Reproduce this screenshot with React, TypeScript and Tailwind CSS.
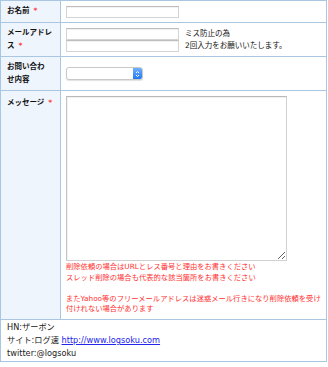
import React from 'react'

const font = { fontFamily: '"DejaVu Sans", "Noto Sans CJK JP", sans-serif' }

function Star() {
  return <span className="text-[#ff3b3b] ml-[4px]">*</span>
}

function TextInput({ w = 'w-[113px]' }: { w?: string }) {
  return (
    <div className={`${w} h-[12px] bg-white border border-[#d4d4d4] border-t-[#bdbdbd] shadow-[inset_0_1px_1px_rgba(0,0,0,0.06)]`} />
  )
}

function FakeSelect() {
  return (
    <div className="flex w-[77px] h-[13px] rounded-[3px] border border-[#c8c8c8] bg-white shadow-[0_1px_1px_rgba(0,0,0,0.12)] overflow-hidden">
      <div className="flex-1" />
      <div className="w-[9px] h-full bg-gradient-to-b from-[#6fb0ff] to-[#1c78f0] flex items-center justify-center">
        <svg width="5" height="8" viewBox="0 0 5 8" fill="none" stroke="white" strokeWidth="1">
          <path d="M1 3 L2.5 1.5 L4 3" />
          <path d="M1 5 L2.5 6.5 L4 5" />
        </svg>
      </div>
    </div>
  )
}

export default function App() {
  return (
    <div className="w-[328px] h-[367px] bg-white text-[#111]" style={font}>
      <div className="w-[327px] border border-[#a9c6e3]">
        {/* お名前 */}
        <div className="flex h-[22px] border-b border-[#a9c6e3]">
          <div className="w-[60px] shrink-0 bg-[#eef5fd] border-r border-[#a9c6e3] pl-[6px] pt-[3px] text-[7.5px] leading-[13px] font-bold">
            お名前<Star />
          </div>
          <div className="flex-1 flex items-center pl-[5px]">
            <TextInput />
          </div>
        </div>

        {/* メールアドレス */}
        <div className="flex h-[34px] border-b border-[#a9c6e3]">
          <div className="w-[60px] shrink-0 bg-[#eef5fd] border-r border-[#a9c6e3] pl-[6px] pt-[3px] text-[7.5px] leading-[13px] font-bold">
            メールアドレ<br />ス<Star />
          </div>
          <div className="flex-1 pl-[5px] pt-[5px] text-[7.5px] leading-[12px]">
            <div className="flex items-center gap-[6px]">
              <TextInput />
              <span>ミス防止の為</span>
            </div>
            <div className="flex items-center gap-[6px]">
              <TextInput />
              <span>2回入力をお願いいたします。</span>
            </div>
          </div>
        </div>

        {/* お問い合わせ内容 */}
        <div className="flex h-[34px] border-b border-[#a9c6e3]">
          <div className="w-[60px] shrink-0 bg-[#eef5fd] border-r border-[#a9c6e3] pl-[6px] pt-[3px] text-[7.5px] leading-[13px] font-bold">
            お問い合わ<br />せ内容
          </div>
          <div className="flex-1 flex items-center pl-[5px]">
            <FakeSelect />
          </div>
        </div>

        {/* メッセージ */}
        <div className="flex h-[229px] border-b border-[#a9c6e3]">
          <div className="w-[60px] shrink-0 bg-[#eef5fd] border-r border-[#a9c6e3] pl-[6px] pt-[5px] text-[7.5px] leading-[13px] font-bold">
            メッセージ<Star />
          </div>
          <div className="flex-1 pl-[5px] pt-[5px]">
            <textarea className="block w-[221px] h-[165px] bg-white border border-[#d0d0d0] border-t-[#b8b8b8] border-l-[#c4c4c4] shadow-[inset_1px_1px_1px_rgba(0,0,0,0.06)] outline-none" />
            <p className="mt-[1px] text-[7.3px] leading-[10.5px] text-[#ff3030]">
              削除依頼の場合はURLとレス番号と理由をお書きください<br />
              スレッド削除の場合も代表的な該当箇所をお書きください<br />
              <br />
              またYahoo等のフリーメールアドレスは迷惑メール行きになり削除依頼を受け付けれない場合があります
            </p>
          </div>
        </div>

        {/* footer */}
        <div className="h-[41px] pl-[6px] pt-[1px] text-[8.2px] leading-[13px] text-[#222]">
          <p>HN:ザーボン</p>
          <p>
            サイト:ログ速{' '}
            <a href="#" className="text-[#2323ee] underline">http://www.logsoku.com</a>
          </p>
          <p>twitter:@logsoku</p>
        </div>
      </div>
    </div>
  )
}
